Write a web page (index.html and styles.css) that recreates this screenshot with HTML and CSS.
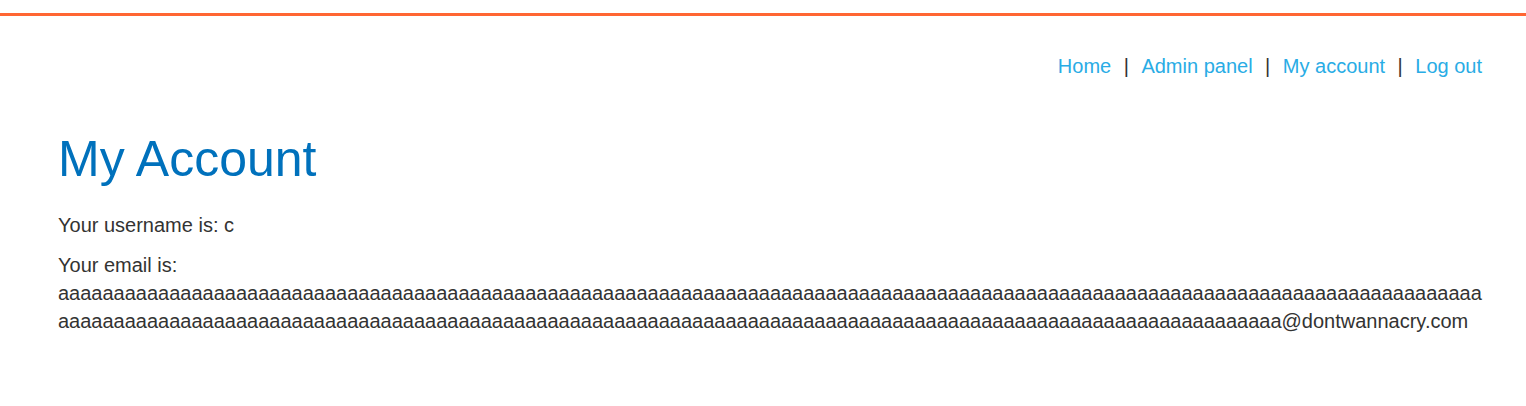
FILE: index.html
```html
<!DOCTYPE html>
<html lang="en">
<head>
<meta charset="utf-8">
<title>My Account</title>
<link rel="stylesheet" href="styles.css">
</head>
<body>
<div class="accent-line"></div>
<div class="container">
  <nav class="top-links">
    <a href="#">Home</a><span class="sep">|</span>
    <a href="#">Admin panel</a><span class="sep">|</span>
    <a href="#">My account</a><span class="sep">|</span>
    <a href="#">Log out</a>
  </nav>
  <h1 class="title">My Account</h1>
  <div class="account-content">
    <p class="line">Your username is: c</p>
    <p class="line">Your email is: <span class="email">aaaaaaaaaaaaaaaaaaaaaaaaaaaaaaaaaaaaaaaaaaaaaaaaaaaaaaaaaaaaaaaaaaaaaaaaaaaaaaaaaaaaaaaaaaaaaaaaaaaaaaaaaaaaaaaaaaaaaaaaaaaaaaaaaaaaaaaaaaaaaaaaaaaaaaaaaaaaaaaaaaaaaaaaaaaaaaaaaaaaaaaaaaaaaaaaaaaaaaaaaaaaaaaaaaaaaaaaaaaaaaaaaaaaaaaaaaaaaa@dontwannacry.com</span></p>
  </div>
</div>
</body>
</html>
```
FILE: styles.css
```css
html, body {
  margin: 0;
  padding: 0;
  background: #ffffff;
}
body {
  font-family: "Liberation Sans", Arial, Helvetica, sans-serif;
  font-size: 20px;
  color: #333332;
}
.accent-line {
  margin-top: 13px;
  height: 3px;
  background: #ff6633;
}
.container {
  padding: 0 44px 0 58px;
}
.top-links {
  display: flex;
  justify-content: flex-end;
  align-items: baseline;
  padding-top: 39px;
  line-height: 23px;
}
.top-links a {
  color: #29ace5;
  text-decoration: none;
}
.sep {
  color: #333332;
  margin: 0 12.5px;
}
.title {
  margin: 52px 0 0;
  font-size: 50px;
  line-height: 58px;
  font-weight: normal;
  color: #0071bc;
}
.account-content {
  margin-top: 23px;
}
.line {
  margin: 0 0 12px;
  line-height: 28px;
}
.email {
  overflow-wrap: break-word;
}
```
